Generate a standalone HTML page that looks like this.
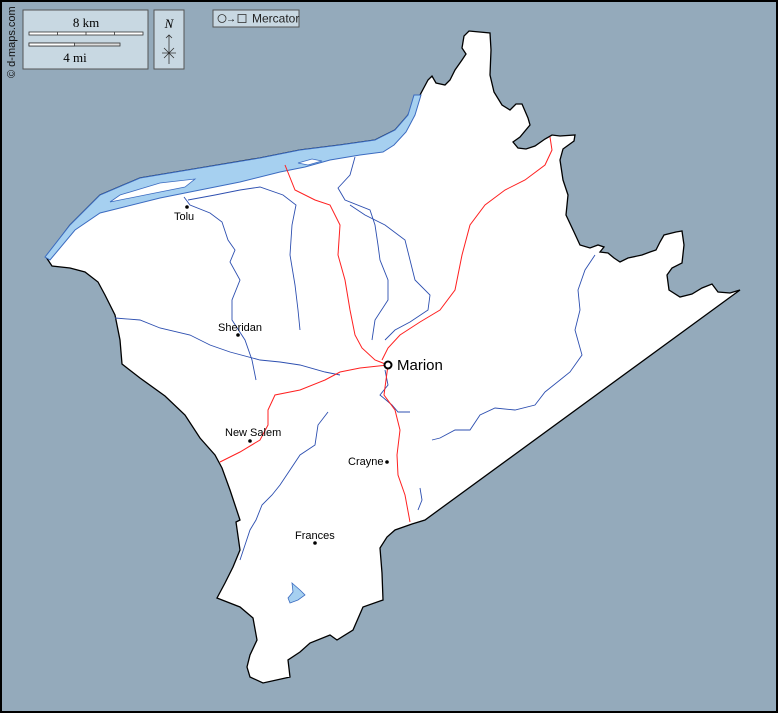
<!DOCTYPE html>
<html><head><meta charset="utf-8"><style>
html,body{margin:0;padding:0}
body{width:778px;height:713px;overflow:hidden;background:#94aabb;font-family:"Liberation Sans",sans-serif}
svg{display:block}
</style></head><body>
<svg width="778" height="713" viewBox="0 0 778 713" xmlns="http://www.w3.org/2000/svg">
<rect x="0" y="0" width="778" height="713" fill="#94aabb"/>
<!-- county -->
<path d="M46,257 L70,225 L100,195 L140,178 L200,168 L260,158 L300,150 L340,145 L375,140 L395,130 L408,115 L415,100 L420,95 L428,80 L432,76 L436,83 L445,85 L450,80 L455,70 L462,60 L466,54 L462,48 L464,36 L469,31 L490,33 L491,50 L490,75 L494,92 L502,105 L510,110 L516,104 L522,104 L528,118 L530,125 L520,137 L513,142 L518,148 L526,149 L535,146 L545,139 L552,135 L560,136 L575,135 L574,141 L563,149 L560,160 L563,180 L568,195 L566,215 L574,232 L580,245 L590,248 L598,245 L604,247 L600,252 L608,253 L614,258 L620,262 L628,258 L642,255 L650,252 L656,250 L660,242 L664,235 L676,232 L682,231 L684,245 L682,263 L672,268 L667,275 L669,290 L680,297 L692,294 L702,288 L712,284 L718,292 L730,293 L740,290 L425,520 L412,524 L395,530 L387,537 L380,548 L382,573 L383,600 L363,607 L353,630 L337,640 L330,635 L310,643 L300,652 L288,660 L290,677 L263,683 L250,677 L247,667 L250,655 L257,640 L253,618 L240,607 L217,598 L225,583 L233,567 L240,550 L236,522 L240,520 L230,490 L222,468 L215,455 L200,438 L185,415 L165,396 L140,378 L122,364 L120,340 L115,315 L105,295 L98,282 L85,272 L70,268 L52,266 Z" fill="#fff" stroke="#000" stroke-width="1.3"/>
<!-- river -->
<path d="M45,257 L70,225 L100,195 L140,178 L200,168 L260,158 L300,150 L340,145 L375,140 L395,130 L408,115 L414,95 L421,95 L415,115 L406,132 L394,145 L383,152 L360,155 L330,160 L305,167 L280,172 L240,182 L200,190 L160,198 L120,208 L100,213 L75,230 L50,260 Z" fill="#a6d0f0" stroke="#3b6bc0" stroke-width="1"/>
<path d="M110,202 L150,194 L185,187 L195,179 L160,183 L120,195 Z" fill="#fff" stroke="#3b6bc0" stroke-width="0.8"/>
<path d="M298,163 L312,159 L322,161 L308,165 Z" fill="#fff" stroke="#3b6bc0" stroke-width="0.8"/>
<path d="M292,583 L300,590 L305,595 L298,600 L290,603 L288,598 L293,592 Z" fill="#a6d0f0" stroke="#3b6bc0" stroke-width="0.8"/>
<!-- streams -->
<g fill="none" stroke="#2d4fb0" stroke-width="0.9">
<path d="M184,197 L190,205 L210,213 L222,222 L228,240 L235,250 L230,262 L240,280 L232,300 L232,320 L245,340 L252,360 L256,380"/>
<path d="M188,200 L215,195 L240,190 L260,187 L283,195 L296,205 L292,225 L290,255 L295,285 L298,310 L300,330"/>
<path d="M355,157 L350,175 L338,188 L345,200 L370,210 L375,225 L378,245 L380,260 L388,280 L388,300 L375,320 L372,340"/>
<path d="M350,205 L365,215 L385,225 L405,240 L410,260 L415,280 L430,295 L428,310 L410,322 L395,330 L385,340"/>
<path d="M115,318 L140,320 L160,328 L190,335 L210,345 L230,352 L260,360 L280,362 L300,365 L325,372 L340,375"/>
<path d="M595,255 L585,270 L578,290 L580,310 L575,330 L582,355 L570,372 L560,380 L545,392 L535,405 L515,410 L495,408 L480,415 L470,430 L455,430 L440,438 L432,440"/>
<path d="M385,370 L388,385 L380,395 L392,405 L398,412 L410,412"/>
<path d="M328,412 L318,425 L315,445 L300,455 L290,470 L280,485 L272,495 L262,505 L256,520 L250,530 L245,545 L240,560"/>
<path d="M420,488 L422,500 L418,510"/>
</g>
<!-- roads -->
<g fill="none" stroke="#ff2020" stroke-width="1">
<path d="M285,165 L295,190 L315,200 L330,205 L340,225 L338,255 L345,280 L350,310 L355,335 L362,348 L375,360 L388,365"/>
<path d="M550,137 L552,150 L545,165 L525,180 L505,190 L485,205 L470,225 L462,255 L455,290 L440,310 L420,322 L400,335 L388,348 L382,360"/>
<path d="M388,365 L360,368 L340,372 L325,380 L300,390 L275,395 L268,410 L268,425 L260,440 L240,452 L220,462"/>
<path d="M388,365 L386,380 L384,395 L395,410 L400,430 L397,455 L398,475 L405,495 L410,522"/>
</g>
<!-- cities -->
<g fill="#000" font-size="11" font-family="Liberation Sans,sans-serif">
<circle cx="187" cy="207" r="1.8"/><text x="174" y="220">Tolu</text>
<circle cx="238" cy="335" r="1.8"/><text x="218" y="331">Sheridan</text>
<circle cx="250" cy="441" r="1.8"/><text x="225" y="436">New Salem</text>
<circle cx="387" cy="462" r="1.8"/><text x="348" y="465">Crayne</text>
<circle cx="315" cy="543" r="1.8"/><text x="295" y="539">Frances</text>
<circle cx="388" cy="365" r="3.5" fill="#fff" stroke="#000" stroke-width="2"/>
<text x="397" y="370" font-size="15">Marion</text>
</g>
<!-- legend -->
<rect x="23" y="10" width="125" height="59" fill="#c8d8e2" stroke="#555" stroke-width="1"/>
<text x="86" y="27" font-family="Liberation Serif,serif" font-size="13" text-anchor="middle">8 km</text>
<rect x="29" y="32" width="114" height="3" fill="#fff" stroke="#333" stroke-width="0.8"/>
<path d="M57.5,32V35M86,32V35M114.5,32V35" stroke="#333" stroke-width="0.8"/>
<rect x="29" y="43" width="91" height="3" fill="#ddd" stroke="#333" stroke-width="0.8"/>
<rect x="29" y="43" width="45.5" height="3" fill="#fff" stroke="#333" stroke-width="0.8"/>
<text x="75" y="62" font-family="Liberation Serif,serif" font-size="13" text-anchor="middle">4 mi</text>
<rect x="154" y="10" width="30" height="59" fill="#c8d8e2" stroke="#555" stroke-width="1"/>
<text x="169" y="28" font-family="Liberation Serif,serif" font-size="13" font-style="italic" text-anchor="middle">N</text>
<path d="M169,35V64M162,53H176M164,48L174,58M174,48L164,58M166,38L169,35L172,38" stroke="#333" stroke-width="0.8" fill="none"/>
<rect x="213" y="10" width="86" height="17" fill="#c8d8e2" stroke="#555" stroke-width="1"/>
<circle cx="222" cy="18.5" r="4" fill="none" stroke="#333" stroke-width="0.8"/>
<text x="226" y="22" font-size="10">→</text>
<rect x="238" y="14.5" width="8" height="8" fill="none" stroke="#333" stroke-width="0.8"/>
<text x="252" y="22.5" font-size="12" fill="#222">Mercator</text>
<text transform="translate(15,78) rotate(-90)" font-size="11" fill="#111">© d-maps.com</text>
<rect x="1" y="1" width="776" height="711" fill="none" stroke="#000" stroke-width="2"/>
</svg>
</body></html>
